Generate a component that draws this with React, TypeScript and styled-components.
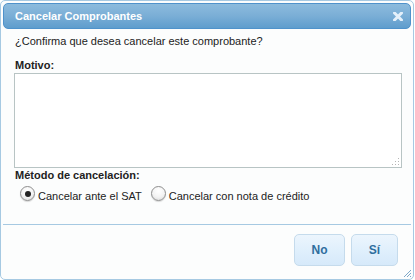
import React from "react";
import styled, { createGlobalStyle } from "styled-components";

const GlobalStyle = createGlobalStyle`
  html, body {
    margin: 0;
    padding: 0;
    background: #ffffff;
  }
  body {
    font-family: "Liberation Sans", Arial, sans-serif;
  }
`;

const Dialog = styled.div`
  box-sizing: border-box;
  width: 414px;
  height: 280px;
  border: 1px solid #a6c9e2;
  border-radius: 5px;
  padding: 2px;
  background: #fcfdfd;
  display: flex;
  flex-direction: column;
  position: relative;
`;

const TitleBar = styled.div`
  box-sizing: border-box;
  height: 26px;
  border: 1px solid #4f92cb;
  border-radius: 5px;
  background: linear-gradient(to bottom, #8cbbdd 0%, #7aaed6 50%, #5f9dcd 100%);
  display: flex;
  align-items: center;
  justify-content: space-between;
  padding: 0 6px 0 11px;
`;

const Title = styled.span`
  color: #ffffff;
  font-weight: bold;
  font-size: 11px;
`;

const CloseButton = styled.button`
  border: 0;
  background: none;
  padding: 0;
  width: 12px;
  height: 12px;
  display: flex;
  align-items: center;
  justify-content: center;
  cursor: pointer;
`;

const Content = styled.div`
  padding: 0 9px 0 11px;
  color: #222222;
  font-size: 11px;
`;

const Question = styled.p`
  margin: 6px 0 0 1px;
  line-height: 13px;
`;

const Label = styled.div<{ $top: number }>`
  font-weight: bold;
  margin: ${(p) => p.$top}px 0 0 1px;
  line-height: 14px;
`;

const FieldWrap = styled.div`
  position: relative;
  margin-top: 1px;
`;

const TextArea = styled.textarea`
  box-sizing: border-box;
  display: block;
  width: 388px;
  height: 95px;
  margin: 0;
  border: 1px solid #b8c4c4;
  background: #ffffff;
  resize: none;
  font-family: inherit;
  font-size: 11px;
  outline: none;
`;

const Dots = styled.svg`
  position: absolute;
  right: 2px;
  bottom: 2px;
  pointer-events: none;
`;

const RadioRow = styled.div`
  display: flex;
  align-items: center;
  margin: 6px 0 0 6px;
  gap: 9px;
`;

const RadioLabel = styled.label`
  display: flex;
  align-items: center;
  gap: 3px;
  font-size: 11px;
  line-height: 16px;
  color: #222222;
  cursor: pointer;
`;

const RadioCircle = styled.span<{ $checked?: boolean }>`
  box-sizing: border-box;
  width: 15px;
  height: 15px;
  border-radius: 50%;
  border: 1px solid #8e8e8e;
  background: radial-gradient(circle at 50% 30%, #ffffff 0%, #f3f3f3 55%, #d6d6d6 100%);
  box-shadow: 0 1px 1px rgba(0, 0, 0, 0.15);
  display: flex;
  align-items: center;
  justify-content: center;
  margin-top: -5px;
  &::after {
    content: "";
    width: 6px;
    height: 6px;
    border-radius: 50%;
    background: #222222;
    display: ${(p) => (p.$checked ? "block" : "none")};
  }
`;

const ButtonPane = styled.div`
  margin-top: auto;
  border-top: 1px solid #a6c9e2;
  display: flex;
  justify-content: flex-end;
  gap: 6px;
  padding: 9px 13px 11px 0;
`;

const Button = styled.button<{ $w: number }>`
  box-sizing: border-box;
  width: ${(p) => p.$w}px;
  height: 32px;
  border: 1px solid #c5dbec;
  border-radius: 5px;
  background: linear-gradient(to bottom, #ecf5fd 0%, #dfeffc 55%, #d6e9fa 100%);
  color: #2e6e9e;
  font-family: "Liberation Sans", Arial, sans-serif;
  font-weight: bold;
  font-size: 12px;
  cursor: pointer;
`;

const Grip = styled.svg`
  position: absolute;
  right: 1px;
  bottom: 1px;
`;

export default function App() {
  return (
    <>
      <GlobalStyle />
      <Dialog>
        <TitleBar>
          <Title>Cancelar Comprobantes</Title>
          <CloseButton aria-label="Cerrar">
            <svg width="10" height="9" viewBox="0 0 10 9">
              <path d="M1.5 1 L8.5 8 M8.5 1 L1.5 8" stroke="#e4f0fa" strokeWidth="3" strokeLinecap="square" />
            </svg>
          </CloseButton>
        </TitleBar>
        <Content>
          <Question>¿Confirma que desea cancelar este comprobante?</Question>
          <Label $top={10}>Motivo:</Label>
          <FieldWrap>
            <TextArea />
            <Dots width="8" height="8" viewBox="0 0 8 8">
              <g fill="#b5b5b5">
                <rect x="6" y="0" width="1" height="1" />
                <rect x="3" y="3" width="1" height="1" />
                <rect x="6" y="3" width="1" height="1" />
                <rect x="0" y="6" width="1" height="1" />
                <rect x="3" y="6" width="1" height="1" />
                <rect x="6" y="6" width="1" height="1" />
              </g>
            </Dots>
          </FieldWrap>
          <Label $top={0}>Método de cancelación:</Label>
          <RadioRow>
            <RadioLabel>
              <RadioCircle $checked />
              Cancelar ante el SAT
            </RadioLabel>
            <RadioLabel>
              <RadioCircle />
              Cancelar con nota de crédito
            </RadioLabel>
          </RadioRow>
        </Content>
        <ButtonPane>
          <Button $w={51}>No</Button>
          <Button $w={47}>Sí</Button>
        </ButtonPane>
        <Grip width="10" height="10" viewBox="0 0 10 10">
          <path d="M9 2 L2 9 M9 5 L5 9 M9 8 L8 9" stroke="#7fa8c8" strokeWidth="1" />
        </Grip>
      </Dialog>
    </>
  );
}
